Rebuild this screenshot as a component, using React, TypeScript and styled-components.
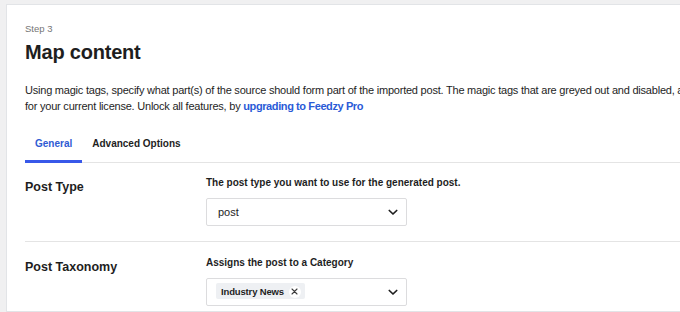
import React from 'react';
import styled, { createGlobalStyle } from 'styled-components';

const GlobalStyle = createGlobalStyle`
	html, body {
		margin: 0;
		padding: 0;
		background: #f0f0f1;
		overflow: hidden;
	}
	body {
		font-family: "Liberation Sans", Arial, sans-serif;
		color: #1e1e1e;
	}
`;

const Page = styled.div`
	padding: 4px 0 0 6px;
	height: 312px;
	box-sizing: border-box;
`;

const Card = styled.section`
	background: #fff;
	border: 1px solid #e2e4e7;
	border-right: none;
	width: 900px;
	height: 100%;
	box-sizing: border-box;
	padding: 17px 0 0 18px;
`;

const Step = styled.div`
	font-size: 9.5px;
	color: #757575;
	line-height: 14px;
`;

const Title = styled.h1`
	margin: 3px 0 0;
	font-size: 20px;
	font-weight: 700;
	line-height: 26px;
	letter-spacing: -0.2px;
`;

const Intro = styled.p`
	margin: 17px 0 0;
	font-size: 11px;
	line-height: 16px;
	letter-spacing: -0.22px;
	width: 730px;
`;

const Link = styled.a`
	color: #2a5bd7;
	font-weight: 700;
	letter-spacing: -0.4px;
	text-decoration: none;
`;

const Tabs = styled.div`
	display: flex;
	margin-top: 11px;
	border-bottom: 1px solid #e4e4e4;
`;

const Tab = styled.div<{ $active?: boolean }>`
	font-size: 10px;
	font-weight: 700;
	line-height: 13px;
	padding: 12px 10px 13px;
	color: ${(p) => (p.$active ? '#2f5bd3' : '#1e1e1e')};
	box-shadow: ${(p) => (p.$active ? 'inset 0 -3px 0 #3858e9' : 'none')};
	margin-bottom: -1px;
`;

const Row = styled.div<{ $last?: boolean }>`
	display: grid;
	grid-template-columns: 181px 1fr;
	padding: ${(p) => (p.$last ? '14px 0 15px' : '13px 0 15px')};
	border-bottom: ${(p) => (p.$last ? 'none' : '1px solid #e4e4e4')};
`;

const Label = styled.div`
	font-size: 12.5px;
	font-weight: 700;
	line-height: 18px;
	padding-top: 2px;
`;

const Help = styled.div`
	font-size: 10px;
	font-weight: 700;
	line-height: 13px;
	margin-bottom: 9px;
`;

const Select = styled.div`
	display: flex;
	align-items: center;
	justify-content: space-between;
	width: 201px;
	height: 28px;
	box-sizing: border-box;
	border: 1px solid #dcdcde;
	border-radius: 2px;
	padding: 0 8px 0 11px;
	font-size: 11px;
`;

const Chip = styled.span`
	display: inline-flex;
	align-items: center;
	gap: 5px;
	background: #eef0f3;
	border-radius: 2px;
	padding: 2px 4px 1px 5px;
	margin-left: -2px;
	margin-top: -2px;
	font-size: 9.5px;
	font-weight: 700;
	letter-spacing: -0.15px;
	line-height: 13px;
`;

const ChipClose = styled.span`
	display: inline-flex;
	align-items: center;
	justify-content: center;
	width: 12px;
	height: 12px;
	border-radius: 50%;
	background: #fff;
`;

const Chevron = () => (
	<svg width="10" height="7" viewBox="0 0 10 7" fill="none">
		<path d="M1.3 1.5 L5 5 L8.7 1.5" stroke="#1e1e1e" strokeWidth="1.7" strokeLinecap="round" strokeLinejoin="round" />
	</svg>
);

const Cross = () => (
	<svg width="7" height="7" viewBox="0 0 7 7">
		<path d="M1 1 L6 6 M6 1 L1 6" stroke="#3c3c3c" strokeWidth="1.1" strokeLinecap="round" />
	</svg>
);

function App() {
	return (
		<>
			<GlobalStyle />
			<Page>
				<Card>
					<Step>Step 3</Step>
					<Title>Map content</Title>
					<Intro>
						Using magic tags, specify what part(s) of the source should form part of the imported post. The magic tags that are greyed out and disabled, are not available for your current license. Unlock all features, by <Link href="#">upgrading to Feedzy Pro</Link>
					</Intro>
					<Tabs>
						<Tab $active>General</Tab>
						<Tab>Advanced Options</Tab>
					</Tabs>
					<Row>
						<Label>Post Type</Label>
						<div>
							<Help>The post type you want to use for the generated post.</Help>
							<Select>
								<span>post</span>
								<Chevron />
							</Select>
						</div>
					</Row>
					<Row $last>
						<Label>Post Taxonomy</Label>
						<div>
							<Help>Assigns the post to a Category</Help>
							<Select>
								<Chip>
									Industry News
									<ChipClose><Cross /></ChipClose>
								</Chip>
								<Chevron />
							</Select>
						</div>
					</Row>
				</Card>
			</Page>
		</>
	);
}

export default App;
